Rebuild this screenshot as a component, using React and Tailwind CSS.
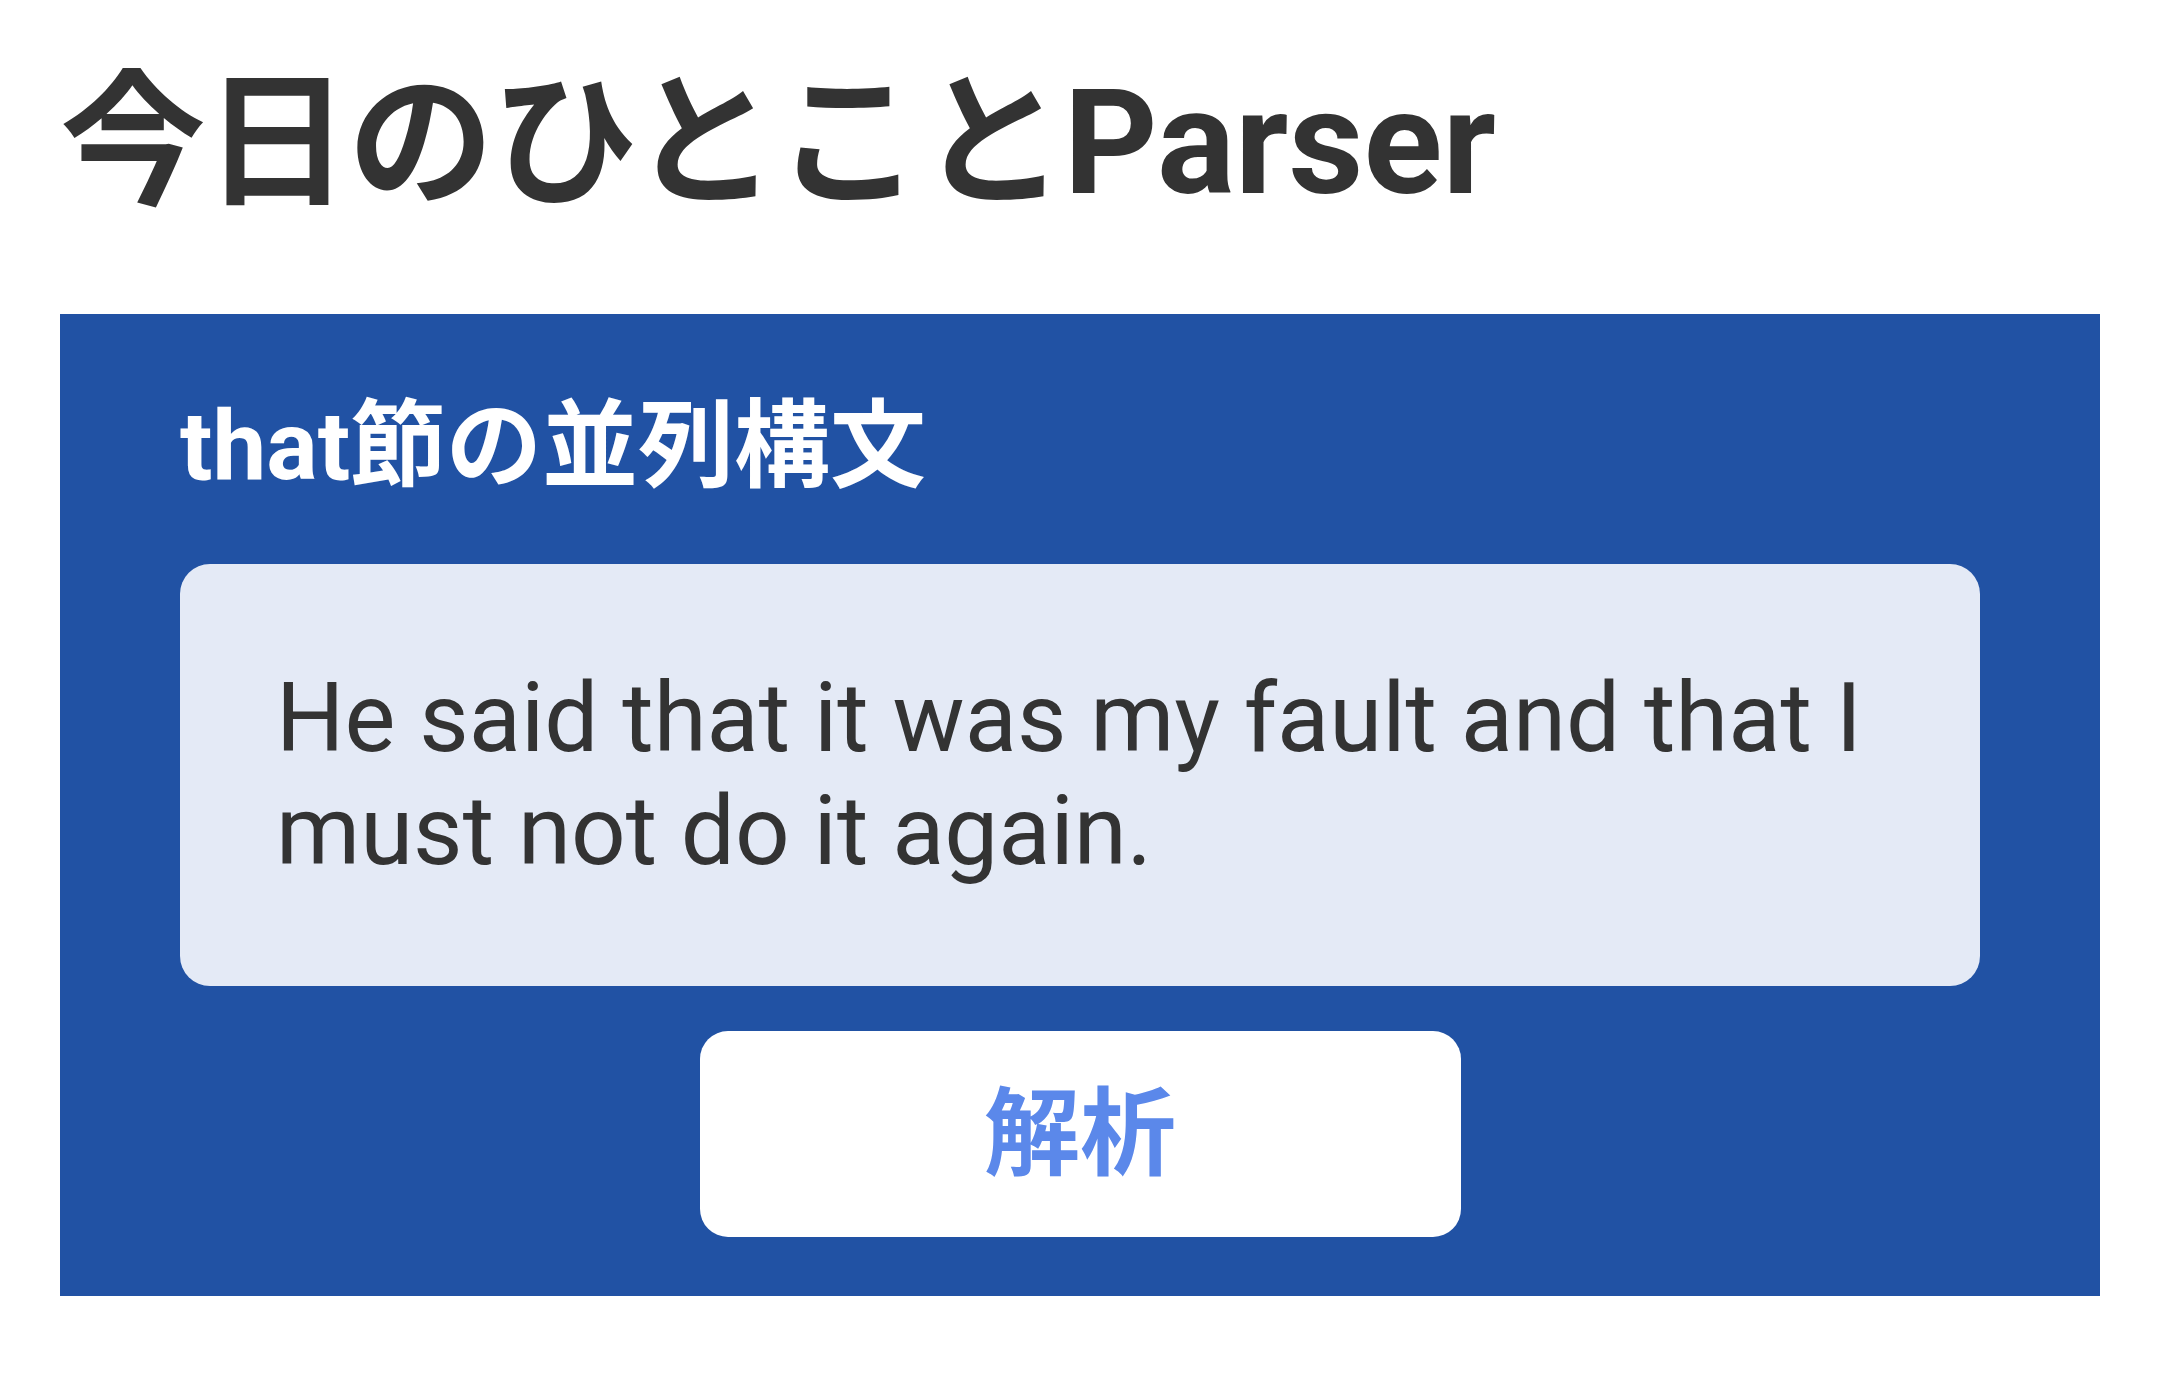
import { useState } from 'react';

const font = { fontFamily: 'Roboto, "Noto Sans CJK JP", sans-serif' };

export default function App() {
  const [text, setText] = useState('He said that it was my fault and that I must not do it again.');

  return (
    <div className="min-h-screen bg-white text-[#333333]" style={font}>
      <h1 className="pl-[60px] pt-[71px] text-[146px] font-bold leading-[146px]">
        <span className="tracking-[-2px]">今日のひとこと</span>Parser
      </h1>

      {/* 構文カード */}
      <section className="mx-[60px] mt-[97px] w-[2040px] bg-[#2152a4] px-[120px] pt-[75px] pb-[59px]">
        <h2 className="text-[96px] font-bold leading-[115px] text-white">that節の並列構文</h2>

        <div className="mt-[60px] rounded-[30px] bg-[#e4eaf6] px-[96px] py-[98px]">
          <p className="text-[96px] leading-[113px] text-[#333333]">{text}</p>
        </div>

        <div className="mt-[45px] flex justify-center">
          <button
            onClick={() => setText(text)}
            className="flex h-[206px] w-[761px] items-center justify-center rounded-[28px] bg-white text-[96px] font-bold text-[#5b88ea]"
          >
            解析
          </button>
        </div>
      </section>
    </div>
  );
}
